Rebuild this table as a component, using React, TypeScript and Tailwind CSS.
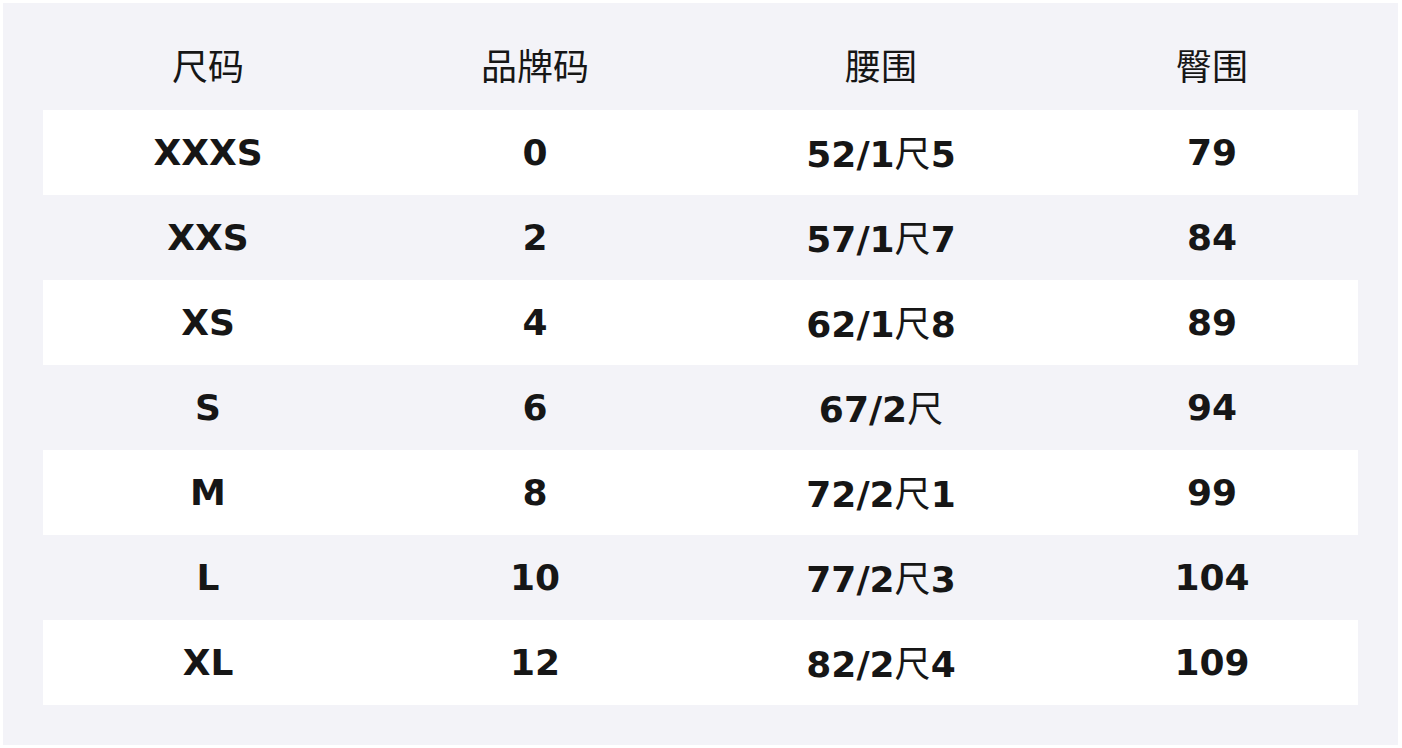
const rows = [
  { size: "XXXS", brand: "0", waist: ["52/1", "5"], hip: "79" },
  { size: "XXS", brand: "2", waist: ["57/1", "7"], hip: "84" },
  { size: "XS", brand: "4", waist: ["62/1", "8"], hip: "89" },
  { size: "S", brand: "6", waist: ["67/2", ""], hip: "94" },
  { size: "M", brand: "8", waist: ["72/2", "1"], hip: "99" },
  { size: "L", brand: "10", waist: ["77/2", "3"], hip: "104" },
  { size: "XL", brand: "12", waist: ["82/2", "4"], hip: "109" },
];

const cols = "grid grid-cols-[330px_324px_368px_294px]";

function App() {
  return (
    <div className="w-[1402px] h-[748px] bg-white p-[3px] font-['DejaVu_Sans','Noto_Sans_CJK_SC',sans-serif] text-[#161616]">
      <div className="h-[742px] w-[1395px] bg-[#f3f3f8] px-[40px]">

        {/* header */}
        <div className={`${cols} h-[107px] items-center pt-[14px] text-[36px] font-['Noto_Sans_CJK_SC',sans-serif]`}>
          <div className="text-center">尺码</div>
          <div className="text-center">品牌码</div>
          <div className="text-center">腰围</div>
          <div className="text-center">臀围</div>
        </div>

        {/* rows */}
        {rows.map((r, i) => (
          <div
            key={r.size}
            className={`${cols} h-[85px] items-center text-[36px] font-bold ${
              i % 2 === 0 ? "bg-white" : "bg-[#f3f3f8]"
            }`}
          >
            <div className="text-center">{r.size}</div>
            <div className="text-center">{r.brand}</div>
            <div className="text-center">
              {r.waist[0]}
              <span className="font-normal font-['Noto_Sans_CJK_SC',sans-serif]">尺</span>
              {r.waist[1]}
            </div>
            <div className="text-center">{r.hip}</div>
          </div>
        ))}

      </div>
    </div>
  );
}

export default App;
